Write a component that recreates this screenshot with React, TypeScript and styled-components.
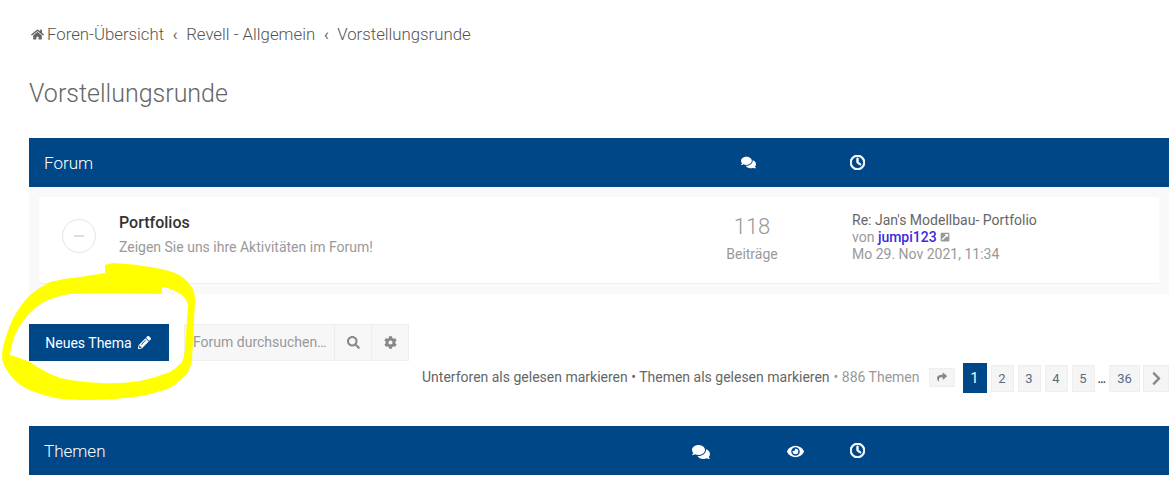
import React from "react";
import styled, { createGlobalStyle } from "styled-components";
import { FaHome, FaComments, FaPencilAlt, FaSearch, FaCog, FaShare, FaChevronRight, FaEye, FaExternalLinkSquareAlt } from "react-icons/fa";
import { FaRegClock } from "react-icons/fa6";

const GlobalStyle = createGlobalStyle`
    html, body {
        margin: 0;
        padding: 0;
        background: #fff;
        font-family: Roboto, "Liberation Sans", sans-serif;
        color: #666;
    }
`;

const pages = ["2", "3", "4", "5"];

export default function App() {
    return (
        <>
            <GlobalStyle />
            <Page>
                <Breadcrumbs>
                    <FaHome size={13} color="#666" />
                    <Crumb>Foren-Übersicht</Crumb>
                    <Sep>‹</Sep>
                    <Crumb>Revell - Allgemein</Crumb>
                    <Sep>‹</Sep>
                    <Crumb>Vorstellungsrunde</Crumb>
                </Breadcrumbs>
                <Title>Vorstellungsrunde</Title>

                <HeaderBar>
                    <HeaderLabel>Forum</HeaderLabel>
                    <HeaderIcon $left={712}><FaComments size={15} /></HeaderIcon>
                    <HeaderIcon $left={821}><ClockIcon /></HeaderIcon>
                </HeaderBar>
                <RowPanel>
                    <Row>
                        <StatusCircle><Dash /></StatusCircle>
                        <RowMain>
                            <RowTitle>Portfolios</RowTitle>
                            <RowDesc>Zeigen Sie uns ihre Aktivitäten im Forum!</RowDesc>
                        </RowMain>
                        <Stats>
                            <StatNumber>118</StatNumber>
                            <StatLabel>Beiträge</StatLabel>
                        </Stats>
                        <LastPost>
                            <LastTitle>Re: Jan's Modellbau- Portfolio</LastTitle>
                            <LastLine>
                                von <UserLink>jumpi123</UserLink> <FaExternalLinkSquareAlt size={10} color="#999" />
                            </LastLine>
                            <LastLine>Mo 29. Nov 2021, 11:34</LastLine>
                        </LastPost>
                    </Row>
                </RowPanel>

                <ActionBar>
                    <NewTopic>Neues Thema <FaPencilAlt size={13} /></NewTopic>
                    <SearchBox>
                        <SearchText>Forum durchsuchen…</SearchText>
                        <SearchButton><FaSearch size={13} /></SearchButton>
                        <SearchButton><FaCog size={13} /></SearchButton>
                    </SearchBox>
                </ActionBar>

                <PaginationBar>
                    <MarkLinks>Unterforen als gelesen markieren • Themen als gelesen markieren</MarkLinks>
                    <TopicCount>• 886 Themen</TopicCount>
                    <JumpButton><FaShare size={10} /></JumpButton>
                    <PageActive>1</PageActive>
                    {pages.map((p) => (
                        <PageButton key={p}>{p}</PageButton>
                    ))}
                    <Dots>…</Dots>
                    <PageButton $wide>36</PageButton>
                    <NextButton><FaChevronRight size={15} /></NextButton>
                </PaginationBar>

                <HeaderBar>
                    <HeaderLabel>Themen</HeaderLabel>
                    <HeaderIcon $left={663}><FaComments size={18} /></HeaderIcon>
                    <HeaderIcon $left={758}><FaEye size={17} /></HeaderIcon>
                    <HeaderIcon $left={821}><ClockIcon /></HeaderIcon>
                </HeaderBar>
            </Page>

            <Scribble viewBox="0 260 200 145" width={200} height={145}>
                <path
                    d="M105 265 L113 263 Q135 264 150 267 Q165 269 175 273 Q186 278 190 285 Q195 290 195 300 L194 320 L192 360 Q190 370 186 375 Q178 383 170 388 Q150 395 135 397 Q110 400 90 400 Q70 400 55 398 Q38 394 25 388 Q14 381 8 372 Q2 364 2 356 Q2 348 5 340 Q9 326 15 315 Q22 303 30 295 Q40 287 50 282 Q65 278 80 277 L105 273 Z M162 294 L162 287 Q170 288 175 291 Q186 296 188 305 L185 350 Q184 358 182 362 Q176 368 170 372 Q155 378 140 381 Q120 384 100 383 Q78 382 60 378 Q42 371 30 362 Q18 357 10 355 Q11 345 15 335 Q20 324 27 316 Q34 308 42 303 Q55 296 70 294 L105 293 Z"
                    fill="#ffff00"
                    fillRule="evenodd"
                />
            </Scribble>
        </>
    );
}

const ClockIcon = () => <FaRegClock size={15} strokeWidth={30} />;

const Page = styled.div`
    box-sizing: border-box;
    width: 1175px;
    height: 480px;
    padding: 0 6px 0 29px;
    overflow: hidden;
`;

const Breadcrumbs = styled.div`
    display: flex;
    align-items: center;
    height: 20px;
    padding: 24px 0 0 2px;
    font-size: 16.8px;
    font-weight: 300;
    color: #555;
    svg { margin-right: 3px; }
`;

const Crumb = styled.span``;

const Sep = styled.span`
    margin: 0 8.5px;
    color: #666;
    font-weight: 400;
`;

const Title = styled.h2`
    margin: 32px 0 0;
    height: 62px;
    line-height: 36px;
    font-size: 25px;
    font-weight: 300;
    color: #666;
`;

const HeaderBar = styled.div`
    position: relative;
    display: flex;
    align-items: center;
    height: 49px;
    padding-left: 15px;
    background: #004788;
    color: #fff;
`;

const HeaderLabel = styled.span`
    font-size: 17px;
    font-weight: 300;
`;

const HeaderIcon = styled.span<{ $left: number }>`
    position: absolute;
    left: ${(p) => p.$left}px;
    top: 17px;
    display: flex;
`;

const RowPanel = styled.div`
    padding: 10px;
    background: #f9f9f9;
`;

const Row = styled.div`
    display: flex;
    align-items: center;
    box-sizing: border-box;
    height: 87px;
    background: #fff;
    border-bottom: 1px solid #eee;
    padding-left: 23px;
`;

const StatusCircle = styled.div`
    box-sizing: border-box;
    display: flex;
    align-items: center;
    justify-content: center;
    width: 34px;
    height: 34px;
    border: 1px solid #e4e4e4;
    border-radius: 50%;
    margin-top: -8px;
`;

const Dash = styled.div`
    width: 10px;
    height: 2px;
    background: #ddd;
`;

const RowMain = styled.div`
    margin-left: 23px;
    width: 588px;
    margin-top: -12px;
`;

const RowTitle = styled.div`
    font-size: 16px;
    font-weight: 500;
    color: #333;
    line-height: 22px;
`;

const RowDesc = styled.div`
    margin-top: 3px;
    font-size: 14px;
    color: #999;
    line-height: 20px;
`;

const Stats = styled.div`
    width: 90px;
    text-align: center;
    margin-top: -5px;
`;

const StatNumber = styled.div`
    font-size: 22px;
    font-weight: 300;
    color: #999;
    line-height: 28px;
`;

const StatLabel = styled.div`
    margin-top: 4px;
    font-size: 14px;
    color: #999;
    line-height: 18px;
`;

const LastPost = styled.div`
    margin-left: 55px;
    margin-top: -5px;
    font-size: 14px;
    line-height: 17px;
`;

const LastTitle = styled.div`
    color: #666;
`;

const LastLine = styled.div`
    color: #999;
`;

const UserLink = styled.span`
    color: #3a2be0;
    font-weight: 500;
`;

const ActionBar = styled.div`
    display: flex;
    align-items: stretch;
    gap: 15px;
    margin-top: 30px;
    height: 37px;
`;

const NewTopic = styled.div`
    display: flex;
    align-items: center;
    justify-content: center;
    box-sizing: border-box;
    gap: 6px;
    width: 140px;
    padding-right: 2px;
    background: #004788;
    color: #fff;
    font-size: 14px;
`;

const SearchBox = styled.div`
    display: flex;
    width: 225px;
    box-sizing: border-box;
    background: #f7f7f7;
    border: 1px solid #eee;
`;

const SearchText = styled.div`
    flex: 1;
    padding-left: 8px;
    line-height: 35px;
    font-size: 14px;
    color: #999;
    white-space: nowrap;
`;

const SearchButton = styled.div`
    display: flex;
    align-items: center;
    justify-content: center;
    width: 36px;
    border-left: 1px solid #eee;
    color: #888;
`;

const PaginationBar = styled.div`
    display: flex;
    align-items: center;
    justify-content: flex-end;
    margin-top: 0;
    height: 32px;
    font-size: 14px;
    margin-bottom: 33px;
    gap: 4px;
`;

const MarkLinks = styled.span`
    color: #666;
`;

const TopicCount = styled.span`
    color: #999;
    margin-right: 5px;
`;

const PageCell = styled.div`
    box-sizing: border-box;
    display: flex;
    align-items: center;
    justify-content: center;
    height: 27px;
    margin-top: 2px;
    font-size: 13px;
`;

const JumpButton = styled(PageCell)`
    width: 26px;
    height: 19px;
    margin-top: 0;
    margin-right: 4px;
    background: #f5f5f5;
    border: 1px solid #eee;
    color: #888;
`;

const PageActive = styled(PageCell)`
    width: 24px;
    height: 30px;
    background: #004788;
    color: #fff;
    font-size: 14px;
`;

const PageButton = styled(PageCell)<{ $wide?: boolean }>`
    width: ${(p) => (p.$wide ? 31 : 23)}px;
    background: #f5f5f5;
    border: 1px solid #eee;
    color: #5a6a80;
`;

const Dots = styled.span`
    font-size: 12px;
    font-weight: 500;
    color: #444;
    margin: 4px -1px 0;
`;

const NextButton = styled(PageCell)`
    width: 26px;
    margin-left: -1px;
    background: #f5f5f5;
    border: 1px solid #eee;
    color: #888;
`;

const Scribble = styled.svg`
    position: absolute;
    left: 0;
    top: 260px;
    pointer-events: none;
`;
